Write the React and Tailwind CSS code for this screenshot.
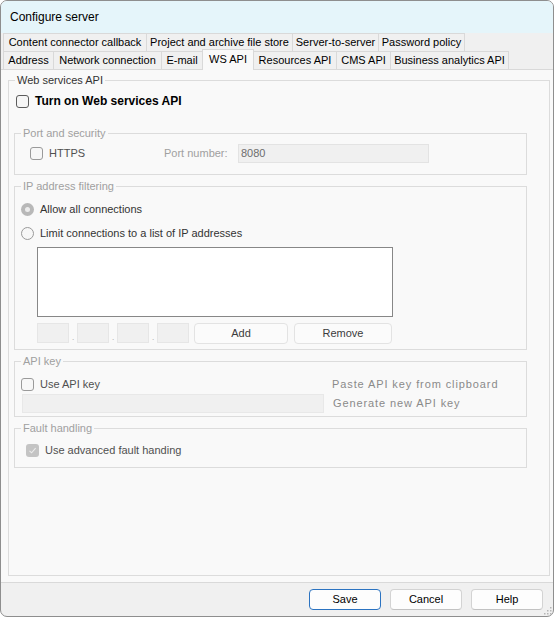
import React from 'react';

// tab strip, two rows; the lower row holds the selected tab
const TOP_TABS = [
  { label: 'Content connector callback', w: 'w-[144px]' },
  { label: 'Project and archive file store', w: 'w-[146px]' },
  { label: 'Server-to-server', w: 'w-[86px]' },
  { label: 'Password policy', w: 'w-[86px]' },
];

const BOTTOM_TABS = [
  { label: 'Address', w: 'w-[51px]' },
  { label: 'Network connection', w: 'w-[108px]' },
  { label: 'E-mail', w: 'w-[41px]' },
  { label: 'WS API', w: 'w-[52px]', active: true },
  { label: 'Resources API', w: 'w-[83px]' },
  { label: 'CMS API', w: 'w-[54px]' },
  { label: 'Business analytics API', w: 'w-[118px]' },
];

function Tab({ label, w, first, active }) {
  if (active) {
    return (
      <div
        className={`${w} relative z-10 -mb-px -ml-px flex h-[21px] shrink-0 items-center justify-center border-x border-t border-[#d9d9d9] bg-[#f9f9f9] pb-[2px]`}
      >
        {label}
      </div>
    );
  }
  return (
    <div
      className={`${w} ${first ? 'border-l' : ''} flex h-[18px] shrink-0 items-center justify-center border-r border-t border-[#d9d9d9] bg-[#f0f0f0]`}
    >
      {label}
    </div>
  );
}

function Group({ title, muted = true, className = '', children }) {
  return (
    <fieldset className={`border border-[#dcdcdc] ${className}`}>
      <legend className={`ml-[6px] px-[2px] leading-[14px] ${muted ? 'text-[#a0a0a0]' : 'text-[#333333]'}`}>
        {title}
      </legend>
      {children}
    </fieldset>
  );
}

function CheckBox({ variant = 'muted' }) {
  if (variant === 'checked') {
    return (
      <span className="flex h-[13px] w-[13px] shrink-0 items-center justify-center rounded-[3px] bg-[#c4c4c4]">
        <svg width="9" height="9" viewBox="0 0 9 9">
          <path d="M1.5 4.8 3.6 6.8 7.6 2.2" fill="none" stroke="#ececec" strokeWidth="1.1" />
        </svg>
      </span>
    );
  }
  return (
    <span
      className={`block h-[13px] w-[13px] shrink-0 rounded-[3px] border ${
        variant === 'dark' ? 'border-[#5c5c5c] bg-[#f6f6f6]' : 'border-[#9a9a9a] bg-[#f7f7f7]'
      }`}
    />
  );
}

function Radio({ selected }) {
  if (selected) {
    return (
      <span className="flex h-[13px] w-[13px] shrink-0 items-center justify-center rounded-full bg-[#b8b8b8]">
        <span className="h-[5px] w-[5px] rounded-full bg-[#ececec]" />
      </span>
    );
  }
  return <span className="block h-[13px] w-[13px] shrink-0 rounded-full border border-[#9a9a9a] bg-[#f7f7f7]" />;
}

function IpBox() {
  return <div className="h-[20px] w-[32px] shrink-0 border border-[#e6e6e6] bg-[#f0f0f0]" />;
}

function Dot() {
  return (
    <span className="flex h-[20px] w-[8px] shrink-0 items-end justify-center pb-[1px] text-[8px] leading-[8px] text-[#9a9a9a]">
      .
    </span>
  );
}

function DialogButton({ label, primary }) {
  return (
    <button
      className={`flex h-[21px] w-[72px] items-center justify-center rounded-[4px] border bg-[#fdfdfd] text-[11px] ${
        primary ? 'border-[#2b73c1]' : 'border-[#d3d3d3] border-b-[#c2c2c2]'
      }`}
    >
      {label}
    </button>
  );
}

export default function App() {
  return (
    <div className="h-[618px] w-[555px] bg-white font-['Liberation_Sans',Arial,sans-serif] text-[11px] text-black">
      <div className="relative flex h-[617px] w-[554px] flex-col overflow-hidden rounded-[7px] border border-[#8e8e8e] bg-[#f0f0f0]">
        {/* Title bar */}
        <div className="flex h-[32px] shrink-0 items-center bg-[#e5f5fa] pl-[9px] text-[12px]">Configure server</div>

        {/* Tabs */}
        <div className="shrink-0 pl-[2px]">
          <div className="flex h-[18px]">
            {TOP_TABS.map((t, i) => (
              <Tab key={t.label} {...t} first={i === 0} />
            ))}
          </div>
          <div className="flex h-[18px] items-end">
            {BOTTOM_TABS.map((t, i) => (
              <Tab key={t.label} {...t} first={i === 0} />
            ))}
          </div>
        </div>

        {/* Tab page */}
        <div className="flex flex-1 flex-col border-y border-[#d9d9d9] bg-[#f9f9f9] pb-[6px] pl-[7px] pr-[3px] pt-[3px]">
          <Group title="Web services API" muted={false} className="flex-1">
            <div className="ml-[7px] mt-[7px] flex h-[14px] items-center">
              <CheckBox variant="dark" />
              <span className="ml-[6px] text-[12px] font-bold">Turn on Web services API</span>
            </div>

            <Group title="Port and security" className="ml-[5px] mt-[18px] w-[513px] pb-[11px]">
              <div className="mt-[4px] flex h-[19px] items-center">
                <div className="flex w-[149px] items-center">
                  <span className="ml-[15px]">
                    <CheckBox />
                  </span>
                  <span className="ml-[6px] text-[#505050]">HTTPS</span>
                </div>
                <span className="w-[74px] text-[#a0a0a0]">Port number:</span>
                <div className="flex h-[19px] w-[191px] items-center border border-[#e3e3e3] bg-[#f0f0f0] pl-[2px] text-[#6d6d6d]">
                  8080
                </div>
              </div>
            </Group>

            <Group title="IP address filtering" className="ml-[5px] mt-[4px] w-[513px] pb-[5px]">
              <div className="ml-[6px] mt-[8px] flex h-[16px] items-center">
                <Radio selected />
                <span className="ml-[6px] text-[#333333]">Allow all connections</span>
              </div>
              <div className="ml-[6px] mt-[8px] flex h-[16px] items-center">
                <Radio />
                <span className="ml-[6px] text-[#333333]">Limit connections to a list of IP addresses</span>
              </div>
              <div className="ml-[22px] mt-[6px] h-[70px] w-[356px] border border-[#878787] bg-white" />
              <div className="ml-[22px] mt-[6px] flex h-[21px] items-start">
                <IpBox />
                <Dot />
                <IpBox />
                <Dot />
                <IpBox />
                <Dot />
                <IpBox />
                <button className="ml-[5px] flex h-[21px] w-[94px] items-center justify-center rounded-[4px] border border-[#e3e3e3] bg-[#fbfbfb] text-[#3c3c3c]">
                  Add
                </button>
                <button className="ml-[6px] flex h-[21px] w-[98px] items-center justify-center rounded-[4px] border border-[#e3e3e3] bg-[#fbfbfb] text-[#3c3c3c]">
                  Remove
                </button>
              </div>
            </Group>

            <Group title="API key" className="ml-[5px] mt-[4px] w-[513px] pb-[3px]">
              <div className="mt-[9px] flex h-[14px] items-center">
                <div className="flex w-[317px] items-center">
                  <span className="ml-[6px]">
                    <CheckBox />
                  </span>
                  <span className="ml-[6px] text-[#505050]">Use API key</span>
                </div>
                <span className="tracking-[0.9px] text-[#8a8a8a]">Paste API key from clipboard</span>
              </div>
              <div className="mt-[3px] flex items-center">
                <div className="ml-[7px] h-[19px] w-[302px] border border-[#e8e8e8] bg-[#f0f0f0]" />
                <span className="ml-[9px] tracking-[0.9px] text-[#8a8a8a]">Generate new API key</span>
              </div>
            </Group>

            <Group title="Fault handling" className="ml-[5px] mt-[4px] w-[513px] pb-[10px]">
              <div className="ml-[11px] mt-[8px] flex h-[14px] items-center">
                <CheckBox variant="checked" />
                <span className="ml-[6px] text-[#505050]">Use advanced fault handing</span>
              </div>
            </Group>
          </Group>
        </div>

        {/* Buttons */}
        <div className="flex h-[33px] shrink-0 justify-end gap-[9px] pr-[10px] pt-[6px]">
          <DialogButton label="Save" primary />
          <DialogButton label="Cancel" />
          <DialogButton label="Help" />
        </div>

        {/* resize grip */}
        <svg className="absolute bottom-[1px] right-[1px]" width="8" height="8" viewBox="0 0 8 8">
          <rect x="6" y="0" width="1.5" height="1.5" fill="#b5b5b5" />
          <rect x="3" y="3" width="1.5" height="1.5" fill="#b5b5b5" />
          <rect x="6" y="3" width="1.5" height="1.5" fill="#b5b5b5" />
          <rect x="0" y="6" width="1.5" height="1.5" fill="#b5b5b5" />
          <rect x="3" y="6" width="1.5" height="1.5" fill="#b5b5b5" />
          <rect x="6" y="6" width="1.5" height="1.5" fill="#b5b5b5" />
        </svg>
      </div>
    </div>
  );
}
